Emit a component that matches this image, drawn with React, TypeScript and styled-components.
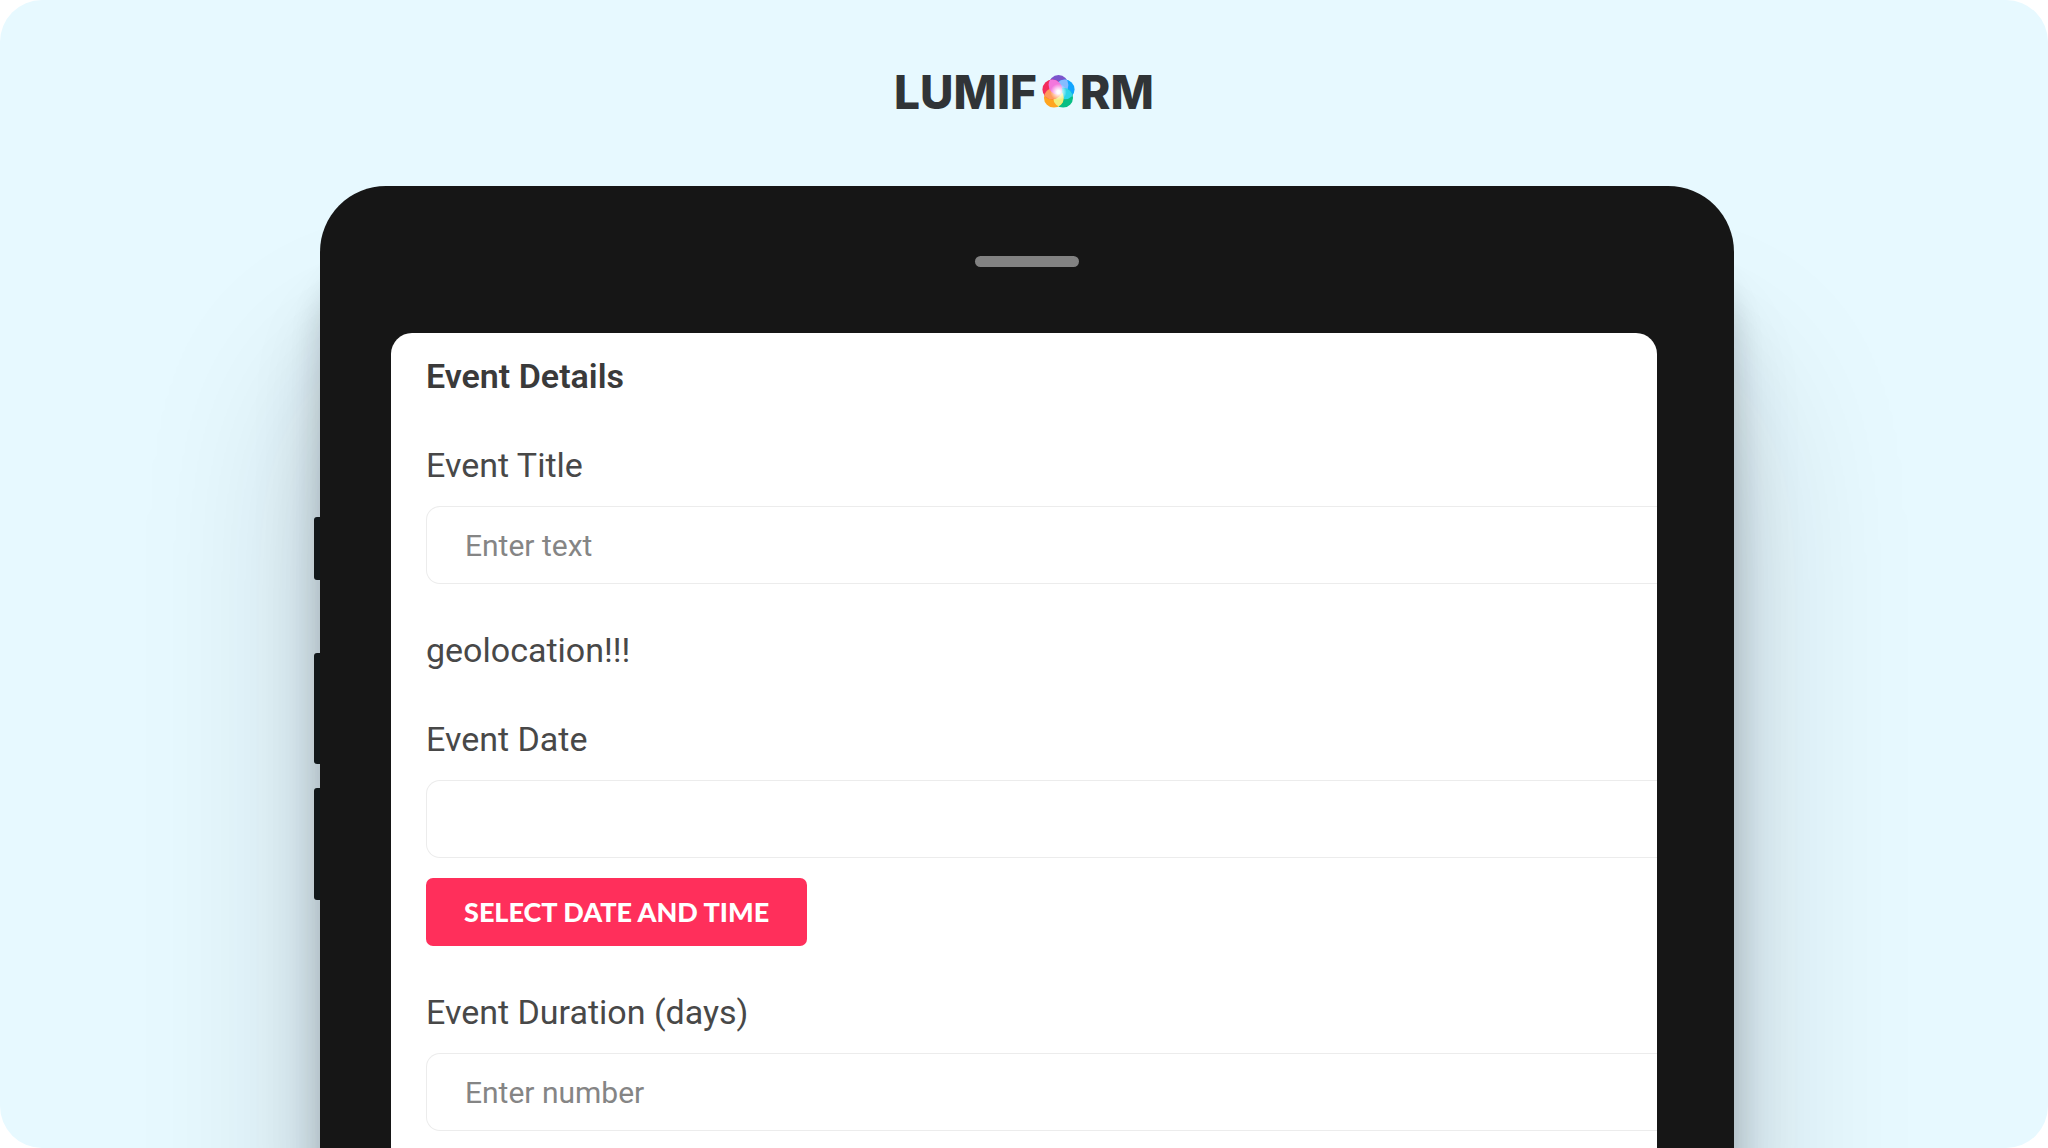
import React from "react";
import styled, { createGlobalStyle } from "styled-components";

const GlobalStyle = createGlobalStyle`
  *, *::before, *::after { box-sizing: border-box; }
  body { margin: 0; background: #ffffff; }
`;

const uiFont = `Roboto, "Liberation Sans", sans-serif`;

const Panel = styled.main`
  display: flex;
  flex-direction: column;
  align-items: center;
  height: 100vh;
  overflow: hidden;
  border-radius: 42px;
  background: #e7f9ff;
  font-family: ${uiFont};
`;

const Brand = styled.header`
  display: flex;
  flex: none;
  align-items: center;
  justify-content: center;
  gap: 5px;
  padding: 66px 0 68px;
  color: #303437;
  font: 800 46px/52px Inter, "Liberation Sans", sans-serif;
`;

const Tablet = styled.div`
  display: flex;
  flex: 1 0 auto;
  width: 90%;
  max-width: 1420px;
`;

const SideKeys = styled.div`
  position: relative;
  z-index: 1;
  flex: none;
  width: 6px;
  padding-top: 331px;
`;

const SideKey = styled.div<{ $size: number; $after: number }>`
  height: ${({ $size }) => $size}px;
  margin-bottom: ${({ $after }) => $after}px;
  border-radius: 3px 0 0 3px;
  background: #10171a;
`;

const Body = styled.div`
  display: flex;
  flex: 1;
  flex-direction: column;
  min-width: 0;
  border-radius: 66px 66px 0 0;
  background: #161616;
  box-shadow:
    0 80px 30px rgba(20, 24, 28, 0.16),
    0 120px 70px rgba(20, 24, 28, 0.14),
    0 190px 180px rgba(20, 22, 36, 0.18);
`;

const Bezel = styled.div`
  display: flex;
  justify-content: center;
  height: 147px;
  padding-top: 70px;
`;

const Speaker = styled.div`
  width: 104px;
  height: 11px;
  border-radius: 6px;
  background: #828282;
`;

const Screen = styled.form`
  display: flex;
  flex: 1;
  flex-direction: column;
  gap: 43px;
  margin: 0 77px 0 71px;
  padding: 20px 0 0 35px;
  overflow: hidden;
  border-radius: 21px 21px 0 0;
  background: #ffffff;
  color: #484848;
  font-size: 34px;
  line-height: 46px;
`;

const Heading = styled.h1`
  margin: 0;
  color: #3a3a3a;
  font-size: 34px;
  font-weight: 600;
  line-height: 46px;
`;

const Note = styled.p`
  margin: 0;
`;

const Field = styled.div`
  display: flex;
  flex-direction: column;
  align-items: flex-start;
`;

const Label = styled.label`
  margin-bottom: 18px;
`;

const Input = styled.input`
  width: 100%;
  height: 78px;
  padding: 0 38px;
  border: 1px solid #ececec;
  border-right: 0;
  border-radius: 14px 0 0 14px;
  outline: none;
  background: #ffffff;
  color: #484848;
  font: 400 30px ${uiFont};

  &::placeholder {
    color: #858585;
    opacity: 1;
  }
`;

const PickButton = styled.button`
  height: 68px;
  margin-top: 20px;
  padding: 0 38px 2px;
  border: 0;
  border-radius: 7px;
  background: #ff2f5b;
  color: #ffffff;
  font: 900 27px Lato, "Liberation Sans", sans-serif;
  cursor: pointer;
`;

function Gem() {
  const petals: [number, number, string][] = [
    [16, 9.6, "#7a55cc"],
    [22, 14, "#12a5ff"],
    [20.5, 22, "#08bf85"],
    [11.5, 22, "#ffa51f"],
    [10, 14, "#f32c5c"],
  ];
  return (
    <svg width="33" height="34" viewBox="0 0 32 33" aria-hidden="true">
      {petals.map(([x, y, c]) => (
        <circle key={c} cx={x} cy={y} r="9.6" fill={c} />
      ))}
      <defs>
        <clipPath id="top"><circle cx="16" cy="9.6" r="9.6" /></clipPath>
        <clipPath id="right"><circle cx="22" cy="14" r="9.6" /></clipPath>
        <clipPath id="low"><circle cx="20.5" cy="22" r="9.6" /></clipPath>
        <clipPath id="base"><circle cx="11.5" cy="22" r="9.6" /></clipPath>
        <clipPath id="left"><circle cx="10" cy="14" r="9.6" /></clipPath>
        <radialGradient id="glow">
          <stop offset="0.2" stopColor="#fff" />
          <stop offset="1" stopColor="#fff" stopOpacity="0" />
        </radialGradient>
      </defs>
      <circle cx="22" cy="14" r="9.6" fill="#86bcff" clipPath="url(#top)" />
      <circle cx="20.5" cy="22" r="9.6" fill="#2fd5e8" clipPath="url(#right)" />
      <circle cx="11.5" cy="22" r="9.6" fill="#f0ee7a" clipPath="url(#low)" />
      <circle cx="10" cy="14" r="9.6" fill="#ff9a5c" clipPath="url(#base)" />
      <circle cx="16" cy="9.6" r="9.6" fill="#f377dd" clipPath="url(#left)" />
      <circle cx="16" cy="16.5" r="8" fill="url(#glow)" />
    </svg>
  );
}

export default function App() {
  return (
    <>
      <GlobalStyle />
      <Panel>
        <Brand>
          <span>LUMIF</span>
          <Gem />
          <span>RM</span>
        </Brand>
        <Tablet>
          <SideKeys>
            <SideKey $size={63} $after={73} />
            <SideKey $size={111} $after={24} />
            <SideKey $size={112} $after={0} />
          </SideKeys>
          <Body>
            <Bezel>
              <Speaker />
            </Bezel>
            <Screen onSubmit={(e) => e.preventDefault()}>
              <Heading>Event Details</Heading>
              <Field>
                <Label htmlFor="title">Event Title</Label>
                <Input id="title" type="text" placeholder="Enter text" />
              </Field>
              <Note>geolocation!!!</Note>
              <Field>
                <Label htmlFor="date">Event Date</Label>
                <Input id="date" type="text" />
                <PickButton type="button">SELECT DATE AND TIME</PickButton>
              </Field>
              <Field>
                <Label htmlFor="duration">Event Duration (days)</Label>
                <Input id="duration" type="text" inputMode="numeric" placeholder="Enter number" />
              </Field>
            </Screen>
          </Body>
        </Tablet>
      </Panel>
    </>
  );
}
